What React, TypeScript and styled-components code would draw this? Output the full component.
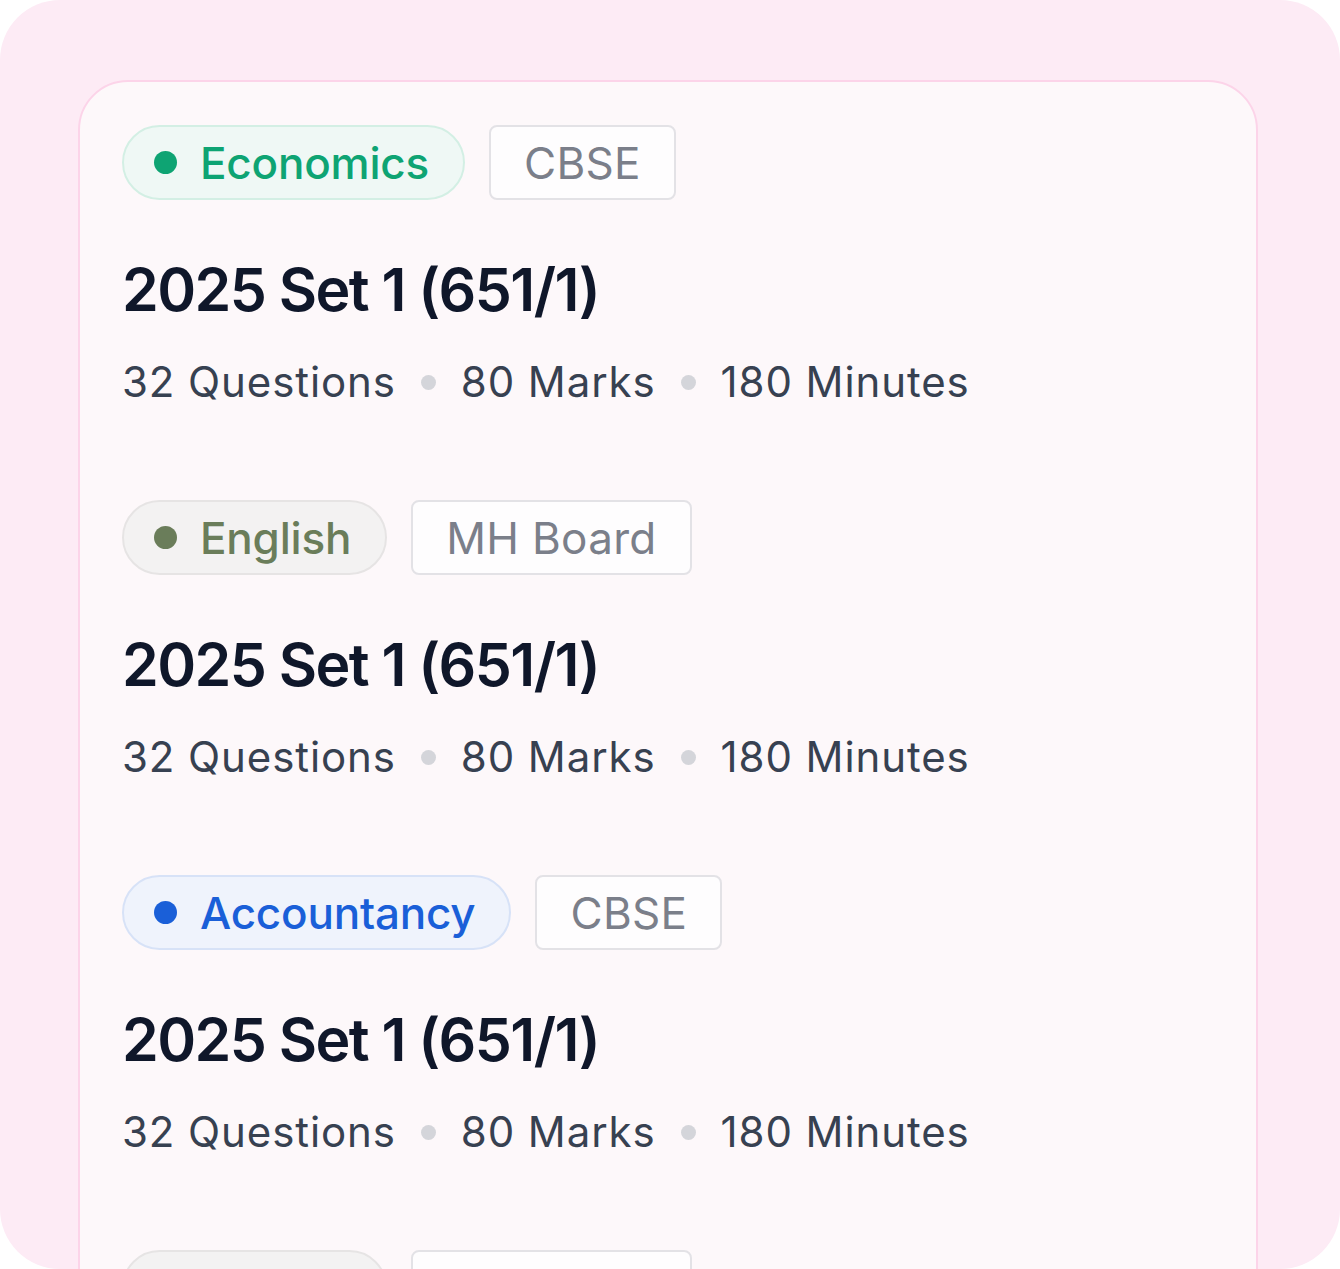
import React from "react";
import styled, { createGlobalStyle } from "styled-components";

const GlobalStyle = createGlobalStyle`
  html, body {
    margin: 0;
    padding: 0;
    background: #ffffff;
  }
  body {
    font-family: Inter, "Noto Sans", "Liberation Sans", sans-serif;
    -webkit-font-smoothing: antialiased;
  }
`;

type Tone = "green" | "olive" | "blue";

const tones: Record<Tone, { bg: string; border: string; fg: string }> = {
  green: { bg: "#eff8f5", border: "#d3efe4", fg: "#0ea473" },
  olive: { bg: "#f3f2f2", border: "#e6e4e4", fg: "#6a7d5a" },
  blue: { bg: "#eff3fc", border: "#d7e2f7", fg: "#1a5fd8" },
};

const papers: { subject: string; tone: Tone; board: string }[] = [
  { subject: "Economics", tone: "green", board: "CBSE" },
  { subject: "English", tone: "olive", board: "MH Board" },
  { subject: "Accountancy", tone: "blue", board: "CBSE" },
  { subject: "English", tone: "olive", board: "MH Board" },
];

const Frame = styled.div`
  width: 1340px;
  height: 1269px;
  box-sizing: border-box;
  background: #fdebf5;
  border-radius: 60px;
  overflow: hidden;
  padding: 80px 82px 0 78px;
`;

// card runs past the bottom of the frame, like a scrolled list
const Card = styled.div`
  box-sizing: border-box;
  min-height: 1400px;
  background: #fdf8fa;
  border: 2px solid #fcd4e9;
  border-radius: 50px;
  padding: 43px 42px 0 42px;
  display: flex;
  flex-direction: column;
  gap: 93px;
`;

const Paper = styled.div`
  display: flex;
  flex-direction: column;
`;

const TagRow = styled.div`
  display: flex;
  gap: 24px;
  align-items: center;
`;

const SubjectPill = styled.div<{ $tone: Tone }>`
  box-sizing: border-box;
  height: 75px;
  display: flex;
  align-items: center;
  gap: 23px;
  padding: 0 34px 0 30px;
  border-radius: 999px;
  background: ${(p) => tones[p.$tone].bg};
  border: 2px solid ${(p) => tones[p.$tone].border};
  color: ${(p) => tones[p.$tone].fg};
  font-size: 44px;
  font-weight: 500;
  letter-spacing: -0.2px;
`;

const Dot = styled.span<{ $tone: Tone }>`
  width: 23px;
  height: 23px;
  border-radius: 50%;
  background: ${(p) => tones[p.$tone].fg};
  flex: none;
`;

const BoardTag = styled.div`
  box-sizing: border-box;
  height: 75px;
  display: flex;
  align-items: center;
  padding: 0 33px;
  border-radius: 8px;
  background: #fefdfe;
  border: 2px solid #e3e2e6;
  color: #7b7f8a;
  font-size: 44px;
  font-weight: 400;
  letter-spacing: 0.3px;
`;

const Title = styled.h2`
  margin: 54px 0 0 0;
  font-size: 59px;
  line-height: 72px;
  font-weight: 600;
  color: #0f172a;
  letter-spacing: -1.55px;
`;

const Meta = styled.div`
  margin-top: 31px;
  display: flex;
  align-items: center;
  gap: 25px;
  font-size: 42px;
  line-height: 50px;
  color: #374151;
  letter-spacing: 0.9px;
`;

const Sep = styled.span`
  width: 15px;
  height: 15px;
  border-radius: 50%;
  background: #d4d5da;
  flex: none;
`;

export default function App() {
  return (
    <>
      <GlobalStyle />
      <Frame>
        <Card>
          {papers.map((p, i) => (
            <Paper key={i}>
              <TagRow>
                <SubjectPill $tone={p.tone}>
                  <Dot $tone={p.tone} />
                  {p.subject}
                </SubjectPill>
                <BoardTag>{p.board}</BoardTag>
              </TagRow>
              <Title>2025 Set 1 (651/1)</Title>
              <Meta>
                <span>32 Questions</span>
                <Sep />
                <span>80 Marks</span>
                <Sep />
                <span>180 Minutes</span>
              </Meta>
            </Paper>
          ))}
        </Card>
      </Frame>
    </>
  );
}
